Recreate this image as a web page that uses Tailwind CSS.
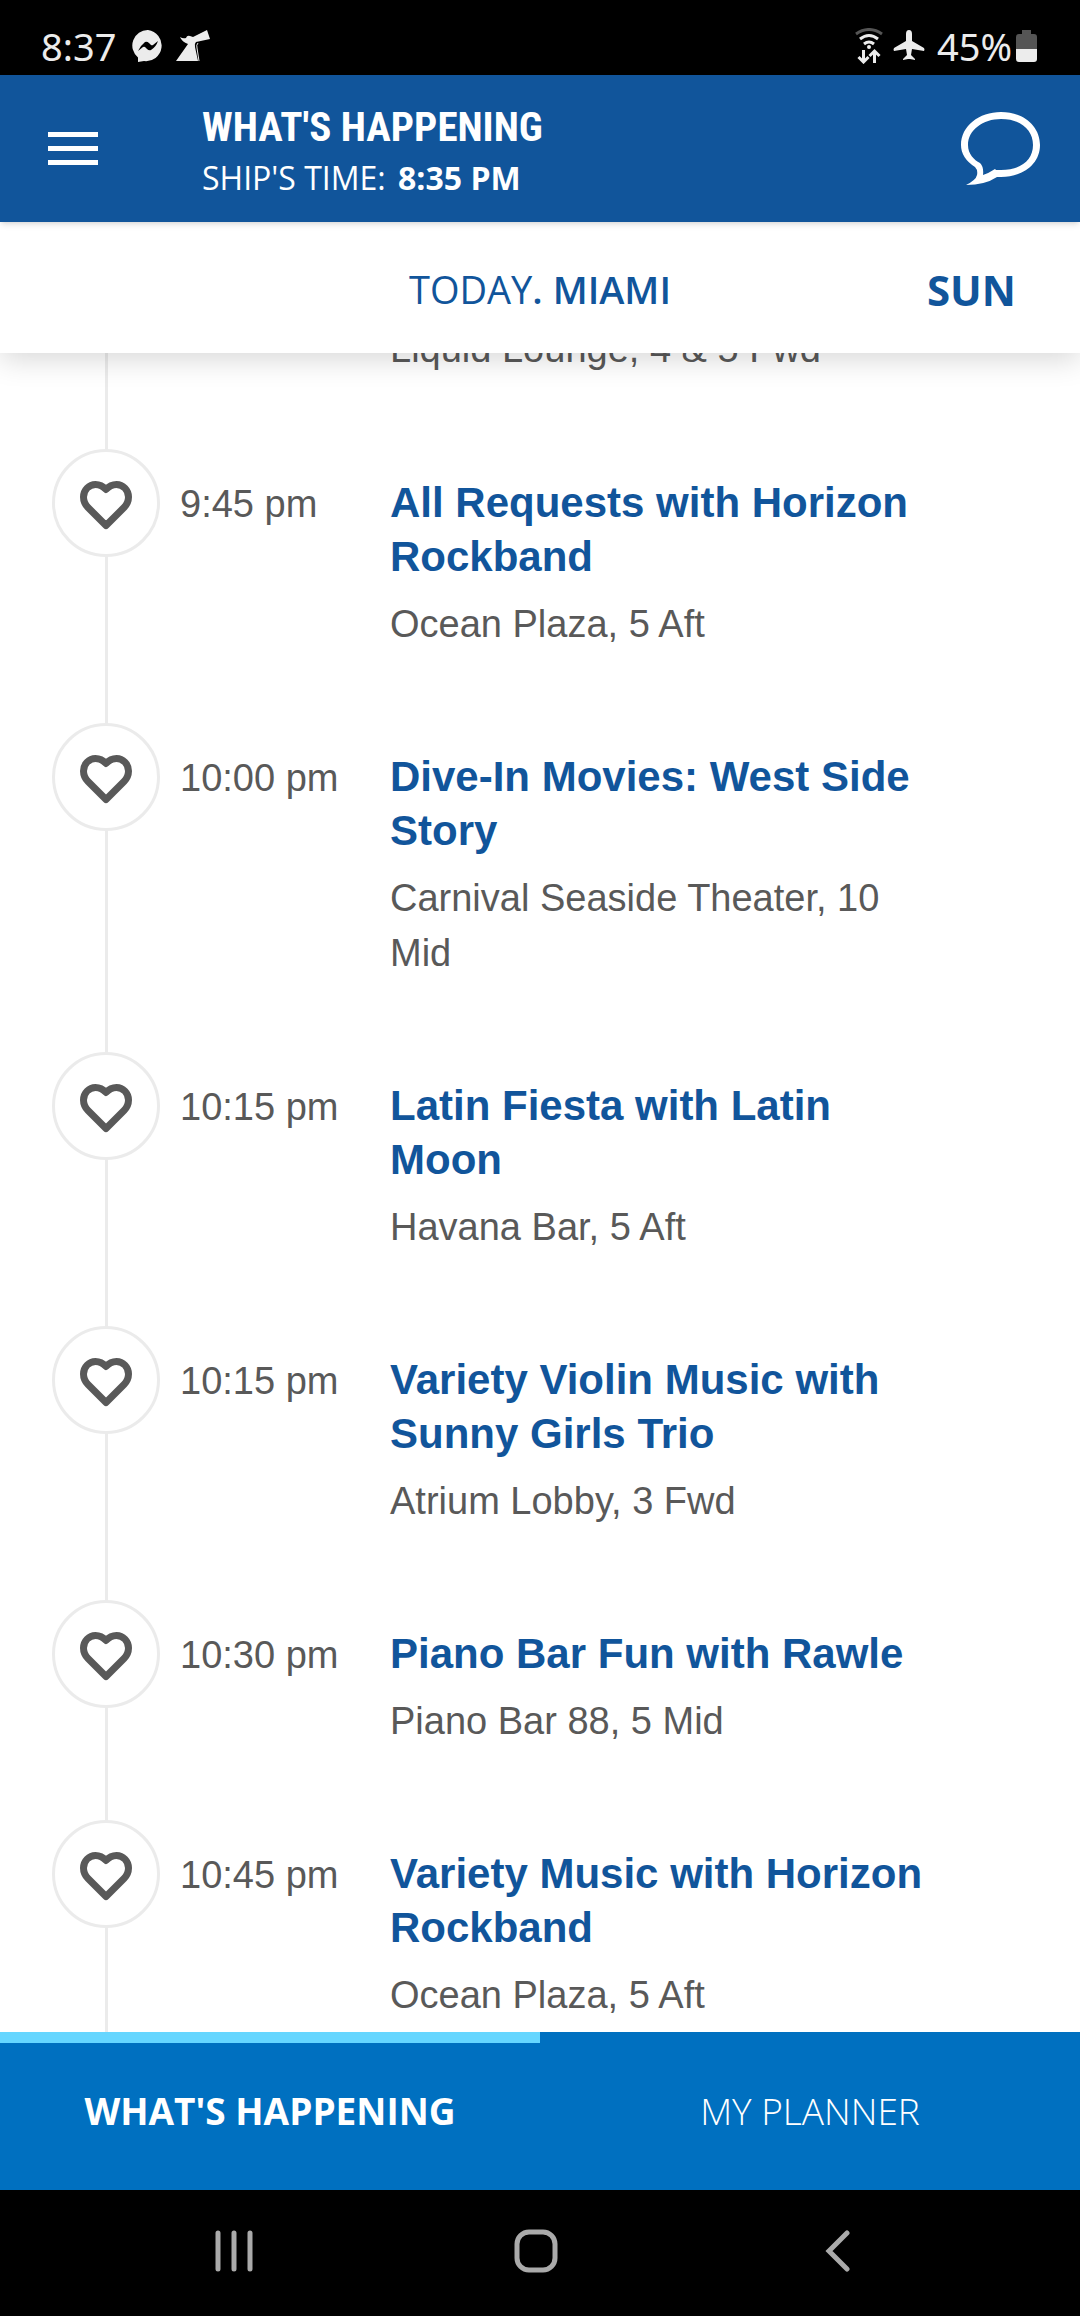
<!DOCTYPE html>
<html lang="en">
<head>
  <meta charset="utf-8">
  <meta name="viewport" content="width=device-width, initial-scale=1">
  <title>What's Happening</title>
  <script src="https://cdn.jsdelivr.net/npm/@tailwindcss/browser@4"></script>
</head>
<body class="flex flex-col h-screen overflow-hidden bg-white text-[#595959] font-['Liberation_Sans',sans-serif]">

  <svg class="hidden">
    <symbol id="heart" viewBox="0 0 52 49">
      <path fill="none" stroke="currentColor" stroke-width="7" stroke-linejoin="round" d="M26 44.500 8 26.500Q3.500 22 3.500 16C3.500 9 9 3.500 15.500 3.500q6 0 10.500 5 4.500-5 10.500-5C43 3.500 48.500 9 48.500 16q0 6-4.500 10.500z" />
    </symbol>
  </svg>

  <!-- Status bar -->
  <div class="flex shrink-0 items-center justify-between h-[75px] pl-[41px] pr-[42px] pt-4 bg-black text-[#ececec] font-['Noto_Sans',sans-serif]">
    <div class="flex items-center">
      <span class="text-[38px] leading-none">8:37</span>
      <svg class="ml-4 w-8 h-8" viewBox="0 0 32 32" fill="currentColor">
        <path d="M16 0a15.500 15.500 0 1 1-4 31L6 32V27.500A15.500 15.500 0 0 1 16 0z" />
        <path fill="#000" d="M6 21q3-6 7-9 2-1 4 1l2 2q1 .5 2 0l5-4q-2 6-7 9-2 1-4-1l-2-2q-1-.5-2 0z" />
      </svg>
      <svg class="ml-3 w-[34px] h-8" viewBox="0 0 34 32" fill="currentColor">
        <path d="M0 31 12 14Q6 12 4 7q3 2 6 1 1-3 4-2l3 1L31 0l3 9-14 3q-2 2-1 5l3 14z" />
        <path fill="none" stroke="currentColor" stroke-width="1" d="M22 13q-2 2-1 5l2 13" />
      </svg>
    </div>
    <div class="flex items-center">
      <svg class="w-[28px] h-9" viewBox="0 0 28 36" fill="none" stroke="currentColor" stroke-width="3">
        <path stroke="#555" d="M1 6q13-9 26 0" />
        <path d="M5 11q9-7 18 0M9 16q5-4 10 0" />
        <circle cx="14" cy="19" r="1" stroke-width="2" />
        <path d="M8.500 22v12M3.500 29l5 5 5-5M19.500 35V23M14.500 28l5-5 5 5" />
      </svg>
      <svg class="ml-[10px] w-8 h-8" viewBox="0 0 32 32" fill="currentColor">
        <path d="M16 0q3 0 3 4v7l12 7q1 2 0 3l-12-2-1 6 4 4v1l-5-1h-2l-5 1v-1l4-4-1-6-12 2q-1-1 0-3l12-7V4q0-4 3-4z" />
      </svg>
      <span class="ml-3 text-[38px] leading-none">45%</span>
      <svg class="ml-1 w-[22px] h-8" viewBox="0 0 22 32">
        <path fill="#555" d="M6 0h9v4h3q3 0 3 3v13H0V7q0-3 3-3h3z" />
        <path fill="currentColor" d="M0 19h21v10q0 3-3 3H3q-3 0-3-3z" />
      </svg>
    </div>
  </div>

  <header class="relative z-20 flex shrink-0 items-center h-[147px] pl-12 pr-10 bg-[#11559b] text-white shadow-md">
    <button type="button" aria-label="Menu">
      <svg class="w-[50px] h-[34px]" viewBox="0 0 50 34" fill="currentColor">
        <path d="M0 0h50v5H0zM0 14h50v5H0zM0 28h50v5H0z" />
      </svg>
    </button>
    <div class="flex-1 pt-1 ml-[104px]">
      <h1 class="text-[41px] leading-[54px] font-bold font-['Roboto_Condensed','Liberation_Sans_Narrow',sans-serif]">WHAT'S HAPPENING</h1>
      <p class="text-[32px] leading-[48px] font-['Open_Sans',sans-serif]">SHIP'S TIME: <b class="ml-1">8:35 PM</b></p>
    </div>
    <button type="button" aria-label="Chat">
      <svg class="w-[79px] h-[73px]" viewBox="0 0 79 73" fill="currentColor" fill-rule="evenodd">
        <path d="M40 0C62 0 79 14 79 33S62 65 40 65H36Q24 73 5 73 15 68 16 63 17 58 14 55 0 46 0 33C0 14 18 0 40 0zM40 7C22 7 7 18 7 33c0 9 6 15 12 18q4 4 3 12 6-2 12-6l1 1h5C60 58 72 48 72 33S60 7 40 7z" />
      </svg>
    </button>
  </header>

  <nav class="relative z-10 grid shrink-0 grid-cols-[1fr_auto_1fr] items-center h-[131px] pt-1 bg-white text-[#11559b] font-['Open_Sans',sans-serif] shadow-[0_6px_28px_rgba(0,0,0,0.16)]">
    <a href="#today" class="col-start-2 text-[38px]">TODAY<span class="font-semibold">. MIAMI</span></a>
    <a href="#sun" class="justify-self-end pr-16 text-[42px] font-bold">SUN</a>
  </nav>

  <!-- Timeline -->
  <main class="flex-1 min-h-0 overflow-hidden">
    <ol class="relative -mt-[31px] text-[38px] leading-[55px] before:absolute before:left-[105px] before:inset-y-0 before:w-[3px] before:bg-[#ebebeb]">
      <li class="pl-[390px] pb-[72px]">Liquid Lounge, 4 &amp; 5 Fwd</li>
      <li class="relative flex items-start pl-[52px] pr-[150px] pb-[71px]">
        <button type="button" aria-label="Add to favorites" class="flex shrink-0 items-center justify-center w-[108px] h-[108px] pt-1 rounded-full border-3 border-[#ebebeb] bg-white">
          <svg class="w-[52px] h-[49px]"><use href="#heart" /></svg>
        </button>
        <time class="shrink-0 w-[210px] ml-5 pt-7">9:45 pm</time>
        <div class="pt-[27px]">
          <h2 class="mb-[13px] text-[42px] leading-[54px] font-bold text-[#11559b]">All Requests with Horizon Rockband</h2>
          <p>Ocean Plaza, 5 Aft</p>
        </div>
      </li>
      <li class="relative flex items-start pl-[52px] pr-[150px] pb-[71px]">
        <button type="button" aria-label="Add to favorites" class="flex shrink-0 items-center justify-center w-[108px] h-[108px] pt-1 rounded-full border-3 border-[#ebebeb] bg-white">
          <svg class="w-[52px] h-[49px]"><use href="#heart" /></svg>
        </button>
        <time class="shrink-0 w-[210px] ml-5 pt-7">10:00 pm</time>
        <div class="pt-[27px]">
          <h2 class="mb-[13px] text-[42px] leading-[54px] font-bold text-[#11559b]">Dive-In Movies: West Side Story</h2>
          <p>Carnival Seaside Theater, 10 Mid</p>
        </div>
      </li>
      <li class="relative flex items-start pl-[52px] pr-[150px] pb-[71px]">
        <button type="button" aria-label="Add to favorites" class="flex shrink-0 items-center justify-center w-[108px] h-[108px] pt-1 rounded-full border-3 border-[#ebebeb] bg-white">
          <svg class="w-[52px] h-[49px]"><use href="#heart" /></svg>
        </button>
        <time class="shrink-0 w-[210px] ml-5 pt-7">10:15 pm</time>
        <div class="pt-[27px]">
          <h2 class="mb-[13px] text-[42px] leading-[54px] font-bold text-[#11559b]">Latin Fiesta with Latin Moon</h2>
          <p>Havana Bar, 5 Aft</p>
        </div>
      </li>
      <li class="relative flex items-start pl-[52px] pr-[150px] pb-[71px]">
        <button type="button" aria-label="Add to favorites" class="flex shrink-0 items-center justify-center w-[108px] h-[108px] pt-1 rounded-full border-3 border-[#ebebeb] bg-white">
          <svg class="w-[52px] h-[49px]"><use href="#heart" /></svg>
        </button>
        <time class="shrink-0 w-[210px] ml-5 pt-7">10:15 pm</time>
        <div class="pt-[27px]">
          <h2 class="mb-[13px] text-[42px] leading-[54px] font-bold text-[#11559b]">Variety Violin Music with Sunny Girls Trio</h2>
          <p>Atrium Lobby, 3 Fwd</p>
        </div>
      </li>
      <li class="relative flex items-start pl-[52px] pr-[150px] pb-[71px]">
        <button type="button" aria-label="Add to favorites" class="flex shrink-0 items-center justify-center w-[108px] h-[108px] pt-1 rounded-full border-3 border-[#ebebeb] bg-white">
          <svg class="w-[52px] h-[49px]"><use href="#heart" /></svg>
        </button>
        <time class="shrink-0 w-[210px] ml-5 pt-7">10:30 pm</time>
        <div class="pt-[27px]">
          <h2 class="mb-[13px] text-[42px] leading-[54px] font-bold text-[#11559b]">Piano Bar Fun with Rawle</h2>
          <p>Piano Bar 88, 5 Mid</p>
        </div>
      </li>
      <li class="relative flex items-start pl-[52px] pr-[150px] pb-[71px]">
        <button type="button" aria-label="Add to favorites" class="flex shrink-0 items-center justify-center w-[108px] h-[108px] pt-1 rounded-full border-3 border-[#ebebeb] bg-white">
          <svg class="w-[52px] h-[49px]"><use href="#heart" /></svg>
        </button>
        <time class="shrink-0 w-[210px] ml-5 pt-7">10:45 pm</time>
        <div class="pt-[27px]">
          <h2 class="mb-[13px] text-[42px] leading-[54px] font-bold text-[#11559b]">Variety Music with Horizon Rockband</h2>
          <p>Ocean Plaza, 5 Aft</p>
        </div>
      </li>
    </ol>
  </main>

  <div class="grid shrink-0 grid-cols-2 h-[158px] bg-[#0070c0] text-white font-['Open_Sans',sans-serif] text-[37px]" role="tablist">
    <button type="button" role="tab" aria-selected="true" class="border-t-[11px] border-[#66d6ff] pb-[11px] font-bold">WHAT'S HAPPENING</button>
    <button type="button" role="tab" aria-selected="false" class="font-light">MY PLANNER</button>
  </div>

  <!-- System navigation -->
  <div class="grid shrink-0 grid-cols-3 place-items-center h-[126px] pl-[83px] pr-[91px] pb-1 bg-black text-[#aaa]">
    <button type="button" aria-label="Recent apps">
      <svg class="w-[38px] h-[42px]" viewBox="0 0 38 42" fill="none" stroke="currentColor" stroke-width="5" stroke-linecap="round">
        <path d="M3 3v36M19 3v36M35 3v36" />
      </svg>
    </button>
    <button type="button" aria-label="Home">
      <svg class="w-11 h-11" viewBox="0 0 44 44" fill="none" stroke="currentColor" stroke-width="5">
        <rect x="3" y="3" width="38" height="38" rx="12" />
      </svg>
    </button>
    <button type="button" aria-label="Back">
      <svg class="w-[26px] h-[42px]" viewBox="0 0 26 42" fill="none" stroke="currentColor" stroke-width="5" stroke-linecap="round">
        <path d="M22 3 4 21l18 18" />
      </svg>
    </button>
  </div>
</body>
</html>
